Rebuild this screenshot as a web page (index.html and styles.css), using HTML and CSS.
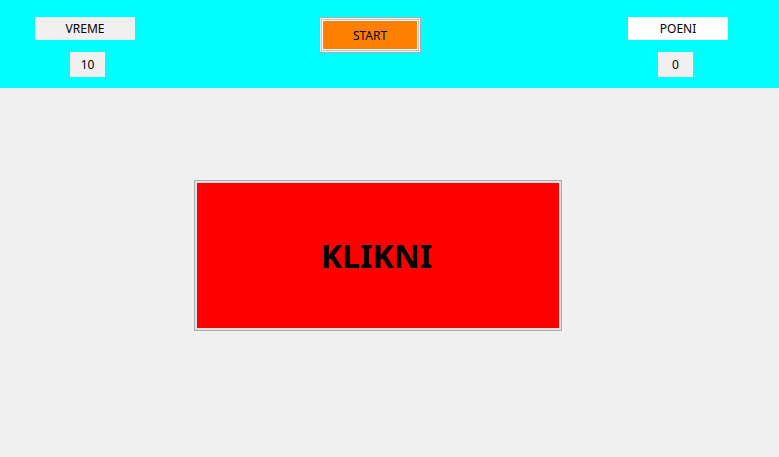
FILE: index.html
```html
<!DOCTYPE html>
<html>
<head>
<meta charset="utf-8">
<link rel="stylesheet" href="styles.css">
</head>
<body>
<div class="header">
  <div class="col col-left">
    <div class="label grey">VREME</div>
    <div class="value value-left">10</div>
  </div>
  <div class="start-btn"><div class="start-ring"><div class="start-face">START</div></div></div>
  <div class="col col-right">
    <div class="label white">POENI</div>
    <div class="value value-right">0</div>
  </div>
</div>
<div class="main">
  <div class="click-btn"><div class="click-face">KLIKNI</div></div>
</div>
</body>
</html>
```
FILE: styles.css
```css
html, body {
  margin: 0;
  padding: 0;
  background: #f0f0f0;
  width: 779px;
  height: 457px;
  overflow: hidden;
  font-family: "Noto Sans", "Open Sans", sans-serif;
  font-size: 12px;
  color: #000;
}
.header {
  background: #00ffff;
  height: 88px;
  box-sizing: border-box;
  padding: 17px 0 0 35px;
  display: flex;
  align-items: flex-start;
}
.col {
  width: 100px;
  display: flex;
  flex-direction: column;
}
.label {
  width: 100px;
  height: 23px;
  display: flex;
  align-items: center;
  justify-content: center;
}
.grey { background: #f0f0f0; }
.white { background: #ffffff; }
.value {
  width: 35px;
  height: 25px;
  margin-top: 12px;
  background: #f0f0f0;
  display: flex;
  align-items: center;
  justify-content: center;
}
.value-left { margin-left: 35px; }
.value-right { margin-left: 30px; }
.start-btn {
  margin-left: 184px;
  width: 102px;
  height: 36px;
  box-sizing: border-box;
  border: 1px solid #adadad;
  background: #eeeeee;
  padding: 1px;
}
.start-ring {
  height: 100%;
  box-sizing: border-box;
  border: 1px solid #c4c4c4;
  padding: 1px;
  background: #ffffff;
}
.start-face {
  height: 100%;
  background: #ff8000;
  display: flex;
  align-items: center;
  justify-content: center;
}
.col-right { margin-left: 207px; }
.main {
  padding: 92px 0 0 194px;
}
.click-btn {
  width: 368px;
  height: 151px;
  box-sizing: border-box;
  border: 1px solid #adadad;
  background: #e1e1e1;
  padding: 2px;
}
.click-face {
  height: 100%;
  box-sizing: border-box;
  padding-right: 3px;
  background: #ff0000;
  display: flex;
  align-items: center;
  justify-content: center;
  font-weight: bold;
  font-size: 32px;
}
```
